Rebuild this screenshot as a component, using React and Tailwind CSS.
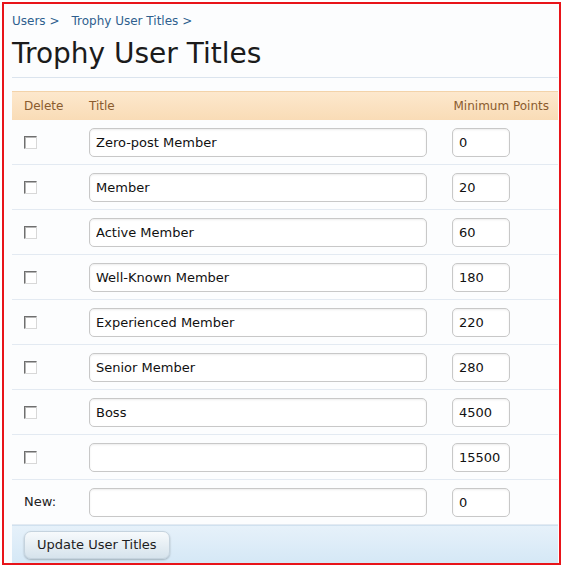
import React from "react";

const rows = [
  { title: "Zero-post Member", points: "0" },
  { title: "Member", points: "20" },
  { title: "Active Member", points: "60" },
  { title: "Well-Known Member", points: "180" },
  { title: "Experienced Member", points: "220" },
  { title: "Senior Member", points: "280" },
  { title: "Boss", points: "4500" },
  { title: "", points: "15500" },
];

function Checkbox() {
  return (
    <span className="block w-[13px] h-[13px] border border-[#6f6f6f] border-r-[#d8d8d8] border-b-[#d8d8d8] bg-white shadow-[inset_1px_1px_0_#b5b5b5]" />
  );
}

function Field({ value, width }) {
  return (
    <input
      readOnly
      value={value}
      className={`${width} h-[29px] rounded-[5px] border border-[#c8c8c8] bg-white px-[6px] text-[13px] text-[#111] shadow-[inset_0_1px_2px_rgba(0,0,0,0.08)] outline-none`}
    />
  );
}

function Row({ label, title, points }) {
  return (
    <div className="flex items-center h-[45px] border-b border-[#e3eaf2]">
      <div className="w-[65px] pl-3 text-[13px] text-[#222]">{label || <Checkbox />}</div>
      <div className="w-[375px] pl-3">
        <Field value={title} width="w-[338px]" />
      </div>
      <div>
        <Field value={points} width="w-[58px]" />
      </div>
    </div>
  );
}

export default function App() {
  return (
    <div className="w-[563px] h-[568px] bg-white p-[2px] font-['DejaVu_Sans',sans-serif]">
      <div className="h-[563px] border-2 border-[#e8141a] bg-[#fcfdfe] flex flex-col">
        <div className="pl-2 pr-[1px] flex flex-col flex-1">
          <div className="pt-[8px] text-[12px] text-[#2f5f8e] flex gap-[12px]">
            <span>Users &gt;</span>
            <span>Trophy User Titles &gt;</span>
          </div>
          <h1 className="mt-[7px] text-[28px] leading-[34px] text-[#1b1b1b]">Trophy User Titles</h1>
          <div className="mt-[6px] border-b border-[#dbe4ee]" />
          <div className="mt-[13px] flex flex-col flex-1">
            <div className="flex items-center h-[29px] border-t border-[#f3d3aa] bg-gradient-to-b from-[#fde8cd] to-[#f9dcb6] text-[12px] text-[#8a5b2e]">
              <div className="w-[65px] pl-3">Delete</div>
              <div className="flex-1 pl-3">Title</div>
              <div className="pr-[9px]">Minimum Points</div>
            </div>
            {rows.map((r, i) => (
              <Row key={i} title={r.title} points={r.points} />
            ))}
            <Row label="New:" title="" points="0" />
            <div className="flex-1 flex items-center pl-3 bg-gradient-to-b from-[#e6f1fa] to-[#d5e8f6] border-t border-[#d0e1ef]">
              <button className="h-[28px] px-[12px] rounded-[7px] border border-[#c5d3de] bg-gradient-to-b from-[#f7fafc] to-[#d6e3ec] text-[13px] text-[#1d1d1d] shadow-[0_1px_2px_rgba(0,0,0,0.25)]">
                Update User Titles
              </button>
            </div>
          </div>
        </div>
      </div>
    </div>
  );
}
